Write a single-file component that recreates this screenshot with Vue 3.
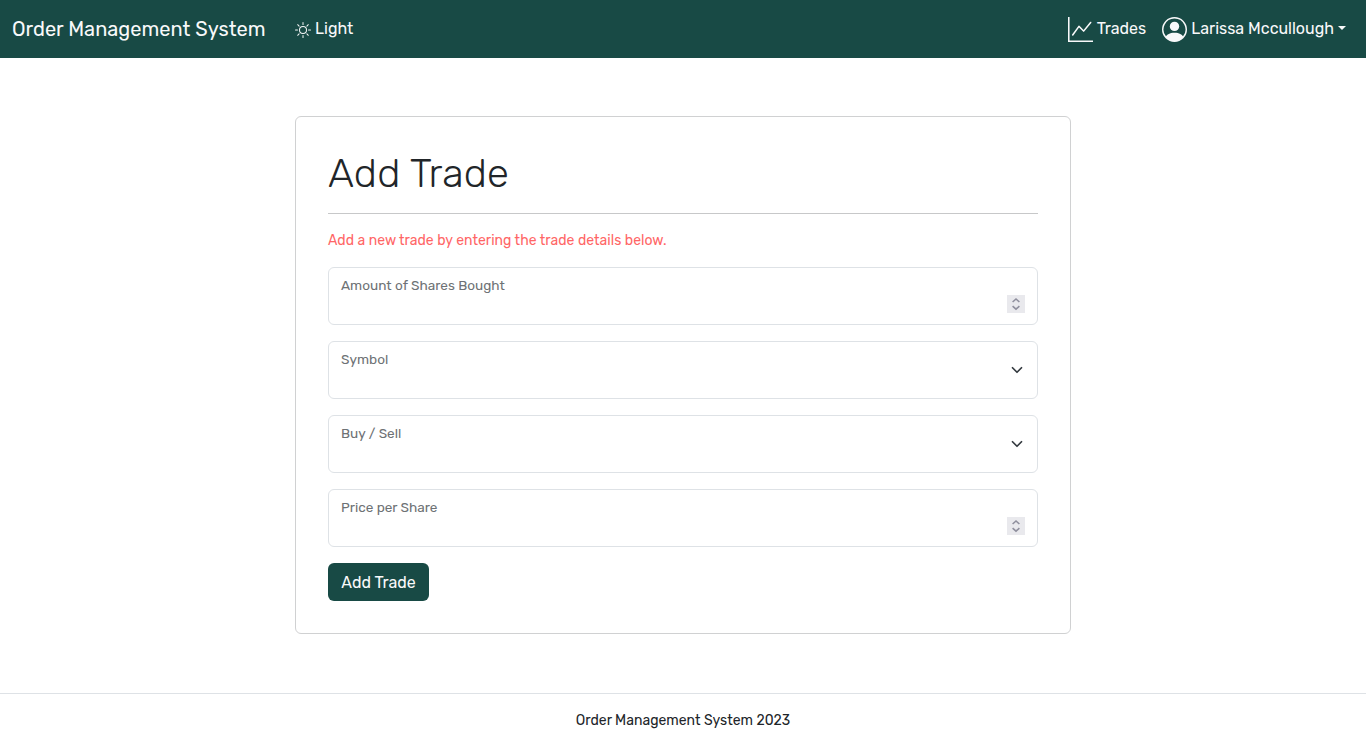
<script setup>
const fields = [
  { id: 'shares', label: 'Amount of Shares Bought', kind: 'number' },
  { id: 'symbol', label: 'Symbol', kind: 'select' },
  { id: 'side', label: 'Buy / Sell', kind: 'select' },
  { id: 'price', label: 'Price per Share', kind: 'number' }
]
</script>

<template>
  <div class="page">
    <header class="navbar">
      <a class="brand">Order Management System</a>
      <a class="theme">
        <svg class="sun" width="16" height="16" viewBox="0 0 16 16" fill="currentColor">
          <path d="M8 11a3 3 0 1 1 0-6 3 3 0 0 1 0 6zm0 1a4 4 0 1 0 0-8 4 4 0 0 0 0 8zM8 0a.5.5 0 0 1 .5.5v2a.5.5 0 0 1-1 0v-2A.5.5 0 0 1 8 0zm0 13a.5.5 0 0 1 .5.5v2a.5.5 0 0 1-1 0v-2A.5.5 0 0 1 8 13zm8-5a.5.5 0 0 1-.5.5h-2a.5.5 0 0 1 0-1h2a.5.5 0 0 1 .5.5zM3 8a.5.5 0 0 1-.5.5h-2a.5.5 0 0 1 0-1h2A.5.5 0 0 1 3 8zm10.657-5.657a.5.5 0 0 1 0 .707l-1.414 1.415a.5.5 0 1 1-.707-.708l1.414-1.414a.5.5 0 0 1 .707 0zm-9.193 9.193a.5.5 0 0 1 0 .707L3.05 13.657a.5.5 0 0 1-.707-.707l1.414-1.414a.5.5 0 0 1 .707 0zm9.193 2.121a.5.5 0 0 1-.707 0l-1.414-1.414a.5.5 0 0 1 .707-.707l1.414 1.414a.5.5 0 0 1 0 .707zM4.464 4.465a.5.5 0 0 1-.707 0L2.343 3.05a.5.5 0 1 1 .707-.707l1.414 1.414a.5.5 0 0 1 0 .708z" />
        </svg>
        <span>Light</span>
      </a>
      <nav class="links">
        <a class="trades">
          <svg width="25" height="25" viewBox="0 0 16 16" fill="currentColor">
            <path fill-rule="evenodd" d="M0 0h1v15h15v1H0V0Zm14.817 3.113a.5.5 0 0 1 .07.704l-4.5 5.5a.5.5 0 0 1-.74.037L7.06 6.767l-3.656 5.027a.5.5 0 0 1-.808-.588l4-5.5a.5.5 0 0 1 .758-.06l2.609 2.61 4.15-5.073a.5.5 0 0 1 .704-.07Z" />
          </svg>
          <span>Trades</span>
        </a>
        <a class="user">
          <svg width="25" height="25" viewBox="0 0 16 16" fill="currentColor">
            <path d="M11 6a3 3 0 1 1-6 0 3 3 0 0 1 6 0z" />
            <path fill-rule="evenodd" d="M0 8a8 8 0 1 1 16 0A8 8 0 0 1 0 8zm8-7a7 7 0 0 0-5.468 11.37C3.242 11.226 4.805 10 8 10s4.757 1.225 5.468 2.37A7 7 0 0 0 8 1z" />
          </svg>
          <span>Larissa Mccullough</span>
          <i class="caret"></i>
        </a>
      </nav>
    </header>

    <main>
      <section class="card">
        <h1>Add Trade</h1>
        <hr />
        <p class="hint">Add a new trade by entering the trade details below.</p>
        <form>
          <div v-for="f in fields" :key="f.id" class="field">
            <label>{{ f.label }}</label>
            <svg v-if="f.kind === 'number'" class="spinner" width="18" height="18" viewBox="0 0 18 18" fill="none">
              <rect width="18" height="18" fill="#e9e9ed" />
              <path d="M5.6 7 9 4l3.4 3M5.6 11.2l3.4 3 3.4-3" stroke="#8f8f9d" stroke-width="1.6" />
            </svg>
            <svg v-else class="chevron" width="16" height="12" viewBox="0 0 16 16" fill="none">
              <path d="m2 5 6 6 6-6" stroke="#343a40" stroke-width="2.3" stroke-linecap="round" stroke-linejoin="round" />
            </svg>
          </div>
          <button type="button">Add Trade</button>
        </form>
      </section>
    </main>

    <footer>Order Management System 2023</footer>
  </div>
</template>

<style>
body { margin: 0; background: #fff; }
</style>

<style scoped>
* { box-sizing: border-box; }
.page {
  display: flex;
  flex-direction: column;
  height: 747px;
  overflow: hidden;
  font-family: Rubik, Roboto, sans-serif;
  font-size: 16px;
  line-height: 1.5;
  color: #212529;
}
.navbar {
  display: flex;
  align-items: center;
  height: 58px;
  flex: none;
  padding: 0 20px 0 12px;
  background: #184a45;
  color: #f8f9fa;
}
.brand { width: 283px; font-size: 20px; letter-spacing: 0.02px; }
.theme { display: flex; align-items: center; gap: 4px; }
.sun { margin-top: 2px; }
.links { display: flex; align-items: center; gap: 16px; margin-left: auto; }
.links a { display: flex; align-items: center; white-space: nowrap; }
.links svg { margin: 1px 4px 0 0; }
.caret {
  width: 0;
  margin: -3px 0 0 4px;
  border: 4.8px solid transparent;
  border-top-color: currentColor;
  border-bottom: 0;
}
main { flex: 1; display: flex; justify-content: center; align-items: flex-start; padding-top: 58px; }
.card {
  width: 776px;
  height: 518px;
  padding: 32px;
  border: 1px solid #d0d1d2;
  border-radius: 6px;
}
h1 { margin: 0; padding-top: 1px; height: 48px; font-size: 40px; font-weight: 300; line-height: 48px; letter-spacing: 0.1px; }
hr { margin: 16px 0; border: 0; border-top: 1px solid #c7c8c9; }
.hint { margin: 0 0 16px; font-size: 14px; line-height: 21px; letter-spacing: 0.03px; color: #ff6666; }
form { display: flex; flex-direction: column; gap: 16px; align-items: flex-start; }
.field {
  display: flex;
  justify-content: space-between;
  width: 100%;
  height: 58px;
  padding: 7px 12px 0;
  border: 1px solid #dee2e6;
  border-radius: 6px;
}
label {
  height: 24px;
  line-height: 24px;
  color: #6e7275;
  transform: translateY(0.4px) scale(0.85);
  transform-origin: 0 0;
}
.spinner { margin-top: 20px; }
.chevron { margin-top: 15px; }
button {
  width: 101px;
  height: 38px;
  padding: 1px 0 0;
  border: 0;
  border-radius: 6px;
  background: #184a45;
  color: #f8f9fa;
  font: inherit;
}
footer {
  flex: none;
  height: 54px;
  border-top: 1px solid #dee2e6;
  font-size: 14px;
  line-height: 53px;
  text-align: center;
}
</style>
